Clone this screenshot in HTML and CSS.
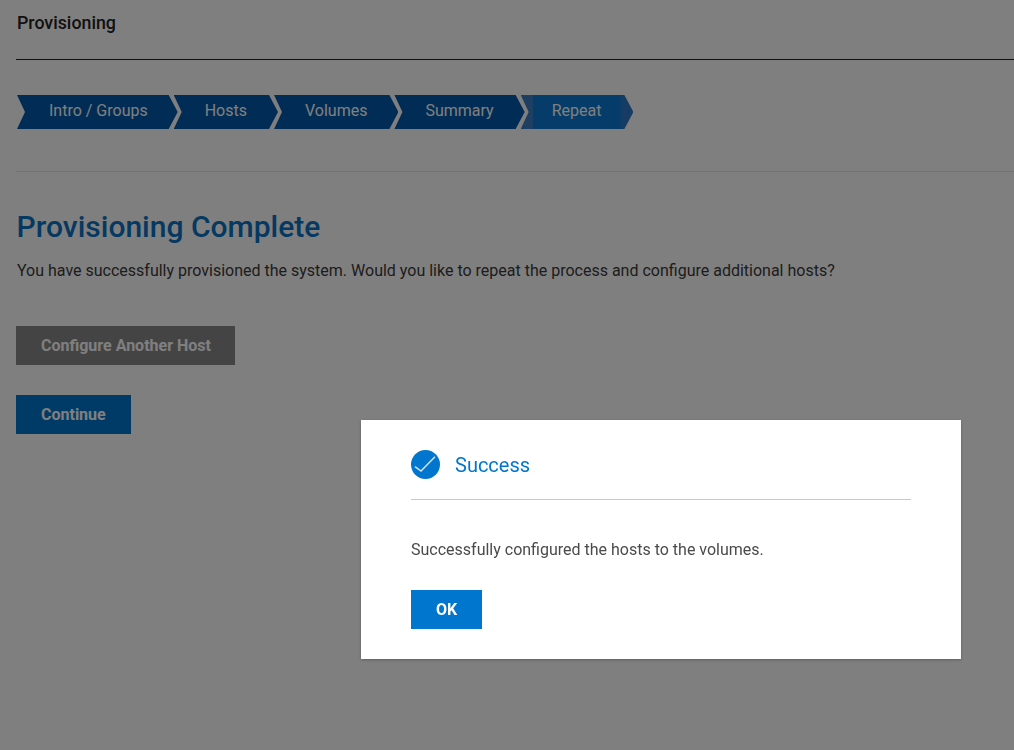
FILE: index.html
```html
<!DOCTYPE html>
<html lang="en">
<head>
<meta charset="utf-8">
<title>Provisioning</title>
<link rel="stylesheet" href="styles.css">
</head>
<body>
<main class="page">
  <header class="page-header">Provisioning</header>
  <nav class="steps">
    <span class="step step-first">Intro / Groups</span>
    <span class="step">Hosts</span>
    <span class="step">Volumes</span>
    <span class="step">Summary</span>
    <span class="step step-current">Repeat</span>
  </nav>
  <section class="content">
    <h1 class="title">Provisioning Complete</h1>
    <p class="lead">You have successfully provisioned the system. Would you like to repeat the process and configure additional hosts?</p>
    <div class="actions">
      <button class="btn btn-disabled" type="button">Configure Another Host</button>
      <button class="btn btn-primary" type="button">Continue</button>
    </div>
  </section>
</main>
<div class="overlay">
  <div class="modal">
    <div class="modal-head">
      <svg class="modal-icon" viewBox="0 0 29 29" aria-hidden="true">
        <circle cx="14.5" cy="14.5" r="14.5" fill="#0076ce"/>
        <path d="M4 16.7 L10 21 L24 6.7" fill="none" stroke="#cfe4f5" stroke-width="1.5"/>
      </svg>
      <span class="modal-title">Success</span>
    </div>
    <p class="modal-text">Successfully configured the hosts to the volumes.</p>
    <button class="btn-ok" type="button">OK</button>
  </div>
</div>
</body>
</html>
```
FILE: styles.css
```css
* { box-sizing: border-box; }
html, body { margin: 0; height: 100%; overflow: hidden; }
body { background: #fff; font-family: Roboto, "Liberation Sans", sans-serif; color: #222; }
.page { padding: 0 0 0 16px; }
.page-header {
  height: 60px;
  padding: 12px 0 0 1px;
  font-size: 17.8px;
  line-height: 21px;
  font-weight: 500;
  color: #222;
  border-bottom: 1px solid #222;
}
.steps {
  display: flex;
  margin-top: 35px;
  padding: 0 0 42px 1px;
  border-bottom: 1px solid #e4e4e4;
}
.step {
  height: 34px;
  padding: 0 31px;
  margin-right: -4px;
  font-size: 16px;
  line-height: 31px;
  color: #fff;
  background: #0059aa;
  clip-path: polygon(0 0, calc(100% - 9px) 0, 100% 50%, calc(100% - 9px) 100%, 0 100%, 8px 50%);
}
.step-first { padding: 0 30px 0 32px; }
.step-current {
  padding-right: 32px;
  background: linear-gradient(90deg, #3e7fc4 0, #3e7fc4 12px, #0a78d2 12px, #0a78d2 calc(100% - 12px), #2f78c8 calc(100% - 12px));
}
.title {
  margin: 36px 0 0 0.6px;
  font-size: 30px;
  line-height: 38px;
  font-weight: 500;
  color: #0a72c4;
}
.lead {
  margin: 13px 0 0 1px;
  font-size: 16px;
  line-height: 24px;
  color: #3a3a3a;
}
.actions {
  display: flex;
  flex-direction: column;
  align-items: flex-start;
  gap: 30px;
  margin-top: 43px;
}
.btn {
  height: 39px;
  padding: 0 25px;
  border: 0;
  font-family: inherit;
  font-size: 16px;
  font-weight: 700;
  color: #fff;
}
.btn-disabled { padding-right: 24px; background: #888; }
.btn-primary { background: #0076ce; }
.overlay {
  position: fixed;
  inset: 0;
  background: rgba(0, 0, 0, 0.5);
}
.modal {
  position: absolute;
  left: 361px;
  top: 420px;
  width: 600px;
  height: 239px;
  padding: 30px 50px;
  background: #fff;
  box-shadow: 0 1px 3px rgba(0, 0, 0, 0.25);
}
.modal-head {
  display: flex;
  align-items: center;
  gap: 15px;
  height: 50px;
  padding-bottom: 20px;
  border-bottom: 1px solid #c8c8c8;
}
.modal-icon { width: 29px; height: 29px; flex: none; }
.modal-title { font-size: 20px; line-height: 30px; color: #0076ce; }
.modal-text {
  margin: 38px 0 0;
  font-size: 16px;
  line-height: 24px;
  color: #4a4a4a;
}
.btn-ok {
  display: block;
  width: 71px;
  height: 39px;
  margin-top: 28px;
  border: 0;
  background: #0076ce;
  color: #fff;
  font-family: inherit;
  font-size: 16px;
  font-weight: 700;
}
```
